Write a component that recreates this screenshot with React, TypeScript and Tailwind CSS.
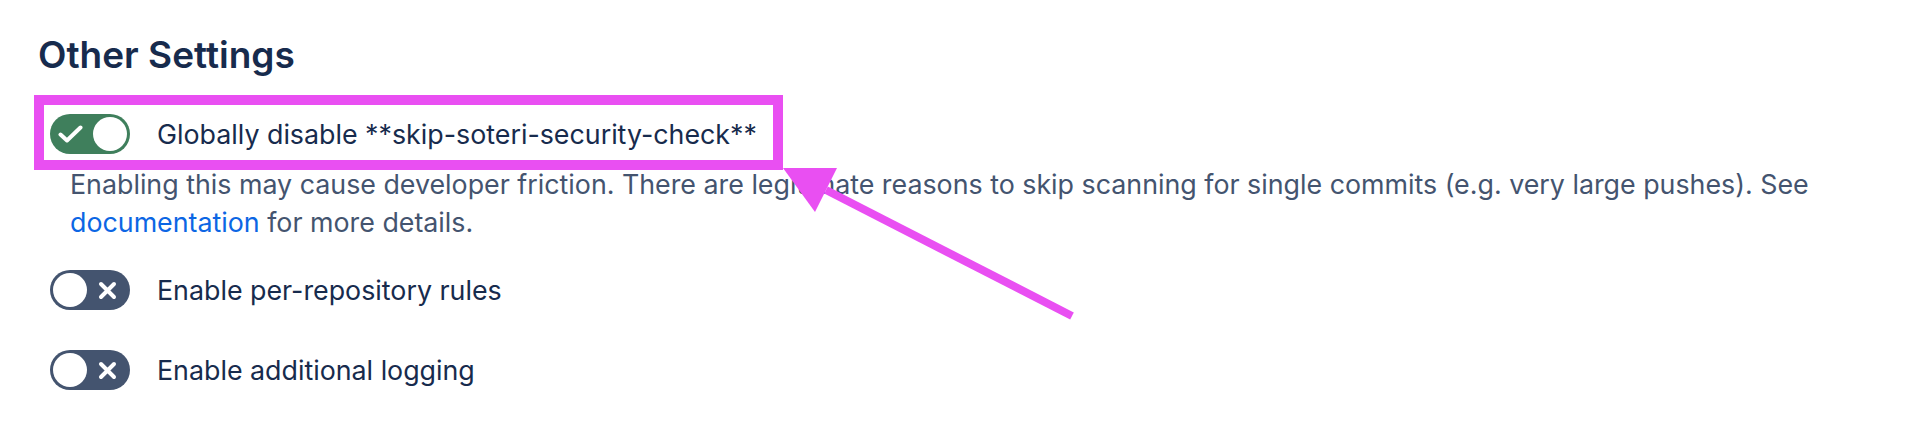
import { ReactNode } from 'react';

type ToggleProps = { on: boolean };

// Pill switch with the knob and a tick / cross glyph inside
function Toggle({ on }: ToggleProps) {
  return (
    <span
      className={
        on
          ? 'relative block w-[80px] h-[40px] rounded-full bg-[#3f7f5c] shrink-0'
          : 'relative block w-[80px] h-[40px] rounded-full bg-[#44546f] shrink-0'
      }
    >
      {on ? (
        <>
          <svg className="absolute left-[8px] top-[11px]" width="25" height="18" viewBox="0 0 25 18" fill="none">
            <polyline points="2.5,9.5 9,15.5 22.5,2.5" stroke="white" strokeWidth="4" strokeLinecap="round" strokeLinejoin="round" />
          </svg>
          <span className="absolute right-[3px] top-[3px] w-[34px] h-[34px] rounded-full bg-white" />
        </>
      ) : (
        <>
          <span className="absolute left-[3px] top-[3px] w-[34px] h-[34px] rounded-full bg-white" />
          <svg className="absolute left-[48px] top-[11px]" width="19" height="19" viewBox="0 0 19 19" fill="none">
            <path d="M3 3L16 16M16 3L3 16" stroke="white" strokeWidth="4" strokeLinecap="round" />
          </svg>
        </>
      )}
    </span>
  );
}

function SettingRow({ on, children }: { on: boolean; children: ReactNode }) {
  return (
    <div className="flex items-center gap-[27px]">
      <Toggle on={on} />
      <span className="text-[26.8px] leading-[40px] text-[#172b4d] whitespace-nowrap">{children}</span>
    </div>
  );
}

export default function App() {
  return (
    <div className="relative min-h-screen w-full bg-white font-['Inter',sans-serif] overflow-hidden">
      <div className="px-[38px] pt-[35px]">
        <h2 className="text-[37px] leading-[40px] font-semibold text-[#172b4d]">Other Settings</h2>

        <div className="mt-[39px] pl-3">
          {/* highlighted row */}
          <div className="relative w-fit">
            <SettingRow on>Globally disable **skip-soteri-security-check**</SettingRow>
            <div className="absolute -left-4 -top-[19px] -bottom-4 -right-[26px] border-[10px] border-[#e94ff2] pointer-events-none" />
          </div>

          <p className="mt-[11px] ml-5 text-[26.8px] leading-[38px] text-[#44546f]">
            Enabling this may cause developer friction. There are legitimate reasons to skip scanning for single commits
            (e.g. very large pushes). See <a className="text-[#0c66e4]">documentation</a> for more details.
          </p>

          <div className="mt-[29px] flex flex-col gap-[40px]">
            <SettingRow on={false}>Enable per-repository rules</SettingRow>
            <SettingRow on={false}>Enable additional logging</SettingRow>
          </div>
        </div>
      </div>

      {/* pointer arrow */}
      <svg className="absolute left-0 top-0 pointer-events-none" width="1916" height="430">
        <line x1="1072" y1="316" x2="826" y2="190" stroke="#e94ff2" strokeWidth="8" />
        <polygon points="783,168 837,168 815,212" fill="#e94ff2" />
      </svg>
    </div>
  );
}
